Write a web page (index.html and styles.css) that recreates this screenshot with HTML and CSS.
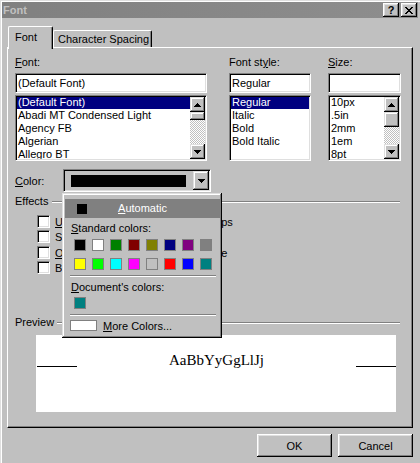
FILE: index.html
```html
<!DOCTYPE html>
<html>
<head>
<meta charset="utf-8">
<title>Font</title>
<link rel="stylesheet" href="styles.css">
</head>
<body>
<div class="window">
  <div class="titlebar">
    <span class="title">Font</span>
    <div class="tbtns">
      <span class="tbtn help">?</span>
      <span class="tbtn close"><svg width="8" height="7" viewBox="0 0 8 7" shape-rendering="crispEdges"><path d="M0 0h2v1H0zM6 0h2v1H6zM1 1h2v1H1zM5 1h2v1H5zM2 2h4v1H2zM3 3h2v1H3zM2 4h4v1H2zM1 5h2v1H1zM5 5h2v1H5zM0 6h2v1H0zM6 6h2v1H6z" fill="#000"/></svg></span>
    </div>
  </div>

  <div class="tabs">
    <div class="tab active">Font</div>
    <div class="tab">Character Spacing</div>
  </div>

  <div class="panel">
    <div class="selrow">
      <div class="col c-font">
        <div class="lbl"><u>F</u>ont:</div>
        <div class="field">(Default Font)</div>
        <div class="list">
          <div class="items">
            <div class="item sel">(Default Font)</div>
            <div class="item">Abadi MT Condensed Light</div>
            <div class="item">Agency FB</div>
            <div class="item">Algerian</div>
            <div class="item">Allegro BT</div>
          </div>
          <div class="vscroll">
            <div class="sbtn"><svg width="7" height="4" viewBox="0 0 7 4" shape-rendering="crispEdges"><path d="M3 0h1v1h1v1h1v1h1v1H0V3h1V2h1V1h1z" fill="#000"/></svg></div>
            <div class="thumb"></div>
            <div class="track"></div>
            <div class="sbtn"><svg width="7" height="4" viewBox="0 0 7 4" shape-rendering="crispEdges"><path d="M0 0h7v1H6v1H5v1H4v1H3V3H2V2H1V1H0z" fill="#000"/></svg></div>
          </div>
        </div>
      </div>

      <div class="col c-style">
        <div class="lbl">Font st<u>y</u>le:</div>
        <div class="field">Regular</div>
        <div class="list">
          <div class="items">
            <div class="item sel">Regular</div>
            <div class="item">Italic</div>
            <div class="item">Bold</div>
            <div class="item">Bold Italic</div>
          </div>
        </div>
      </div>

      <div class="col c-size">
        <div class="lbl"><u>S</u>ize:</div>
        <div class="field"></div>
        <div class="list">
          <div class="items">
            <div class="item">10px</div>
            <div class="item">.5in</div>
            <div class="item">2mm</div>
            <div class="item">1em</div>
            <div class="item">8pt</div>
          </div>
          <div class="vscroll">
            <div class="sbtn"><svg width="7" height="4" viewBox="0 0 7 4" shape-rendering="crispEdges"><path d="M3 0h1v1h1v1h1v1h1v1H0V3h1V2h1V1h1z" fill="#000"/></svg></div>
            <div class="thumb tall"></div>
            <div class="track"></div>
            <div class="sbtn"><svg width="7" height="4" viewBox="0 0 7 4" shape-rendering="crispEdges"><path d="M0 0h7v1H6v1H5v1H4v1H3V3H2V2H1V1H0z" fill="#000"/></svg></div>
          </div>
        </div>
      </div>
    </div>

    <div class="colorrow">
      <div class="colorlbl"><u>C</u>olor:</div>
      <div class="combo">
        <div class="cswatch"></div>
        <div class="cbtn"><svg width="7" height="4" viewBox="0 0 7 4" shape-rendering="crispEdges"><path d="M0 0h7v1H6v1H5v1H4v1H3V3H2V2H1V1H0z" fill="#000"/></svg></div>
      </div>
    </div>

    <div class="legend effects-legend"><span>Effects</span><span class="rule"></span></div>
    <div class="checks">
      <label class="chk"><span class="box"></span><span><u>U</u>nderline</span></label>
      <label class="chk"><span class="box"></span><span>Small caps</span></label>
      <label class="chk"><span class="box"></span><span>Stri<u>k</u>ethrough</span></label>
      <label class="chk"><span class="box"></span><span>Hidden</span></label>
      <label class="chk"><span class="box"></span><span><u>O</u>verline</span></label>
      <label class="chk"><span class="box"></span><span>Capitalize</span></label>
      <label class="chk"><span class="box"></span><span>Blink</span></label>
      <label class="chk"><span class="box"></span><span>Strong</span></label>
    </div>

    <div class="legend preview-legend"><span>Preview</span><span class="rule"></span></div>
    <div class="preview">
      <div class="prow">
        <span class="pline left"></span>
        <span class="ptext">AaBbYyGgLlJj</span>
        <span class="pline right"></span>
      </div>
    </div>
  </div>

  <div class="footer">
    <button class="btn">OK</button>
    <button class="btn">Cancel</button>
  </div>

  <div class="popup">
    <div class="auto"><span class="autosw"></span><span class="autotext"><u>A</u>utomatic</span></div>
    <div class="plbl"><u>S</u>tandard colors:</div>
    <div class="grid">
      <span class="sw" style="background:#000000"></span>
      <span class="sw" style="background:#ffffff"></span>
      <span class="sw" style="background:#008000"></span>
      <span class="sw" style="background:#800000"></span>
      <span class="sw" style="background:#808000"></span>
      <span class="sw" style="background:#000080"></span>
      <span class="sw" style="background:#800080"></span>
      <span class="sw" style="background:#808080"></span>
      <span class="sw" style="background:#ffff00"></span>
      <span class="sw" style="background:#00ff00"></span>
      <span class="sw" style="background:#00ffff"></span>
      <span class="sw" style="background:#ff00ff"></span>
      <span class="sw" style="background:#c0c0c0"></span>
      <span class="sw" style="background:#ff0000"></span>
      <span class="sw" style="background:#0000ff"></span>
      <span class="sw" style="background:#008080"></span>
    </div>
    <div class="sep"></div>
    <div class="plbl"><u>D</u>ocument's colors:</div>
    <div class="docsw"><span class="sw" style="background:#008080"></span></div>
    <div class="sep"></div>
    <div class="more"><span class="morebox"></span><span><u>M</u>ore Colors...</span></div>
  </div>
</div>
</body>
</html>
```

FILE: styles.css
```css
* { box-sizing: border-box; }
html, body { margin: 0; padding: 0; }
body {
  background: #c0c0c0;
  font-family: "Liberation Sans", Arial, sans-serif;
  font-size: 11px;
  color: #000;
  overflow: hidden;
}
u { text-decoration: underline; text-underline-offset: 1px; }

.window {
  position: relative;
  width: 420px;
  height: 463px;
  padding: 2px;
  background: #c0c0c0;
  box-shadow: inset 1px 1px #dfdfdf, inset 2px 2px #fff;
}

/* title bar */
.titlebar {
  height: 16px;
  display: flex;
  align-items: center;
  justify-content: space-between;
  background: linear-gradient(to right, #808080, #8e8e8e);
  padding: 0 1px;
}
.title { font-weight: bold; color: #c0c0c0; line-height: 16px; }
.tbtns { display: flex; gap: 2px; }
.tbtn {
  width: 16px;
  height: 14px;
  background: #c0c0c0;
  box-shadow: inset -1px -1px #000, inset 1px 1px #fff, inset -2px -2px #808080, inset 2px 2px #dfdfdf;
  display: flex;
  align-items: center;
  justify-content: center;
  font-weight: bold;
  font-size: 11px;
  line-height: 14px;
}
.tbtn svg { display: block; }

/* tabs */
.tabs {
  height: 31px;
  display: flex;
  align-items: flex-end;
  padding-left: 6px;
  margin-bottom: -2px;
  position: relative;
  z-index: 2;
}
.tab {
  width: 99px;
  height: 17px;
  margin-bottom: 2px;
  border: 1px solid #fff;
  border-bottom: none;
  border-right-color: #000;
  box-shadow: inset -1px 0 #808080;
  border-radius: 2px 2px 0 0;
  padding-left: 4px;
  line-height: 16px;
  background: #c0c0c0;
  white-space: nowrap;
}
.tab.active {
  width: 45px;
  height: 23px;
  margin-bottom: 0;
  padding-left: 6px;
  line-height: 20px;
}

/* panel */
.panel {
  margin-left: 5px;
  width: 406px;
  height: 381px;
  border: 1px solid #fff;
  border-right-color: #000;
  border-bottom-color: #000;
  box-shadow: inset -1px -1px #808080;
  padding: 8px 10px 0 7px;
}

.selrow { display: flex; }
.col { display: flex; flex-direction: column; }
.c-font { width: 192px; }
.c-style { width: 82px; margin-left: 22px; }
.c-size { width: 73px; margin-left: 17px; }
.lbl { height: 13px; line-height: 13px; margin-bottom: 4px; white-space: nowrap; }

.field, .list, .combo {
  border: 1px solid;
  border-color: #808080 #fff #fff #808080;
  box-shadow: inset 1px 1px #000, inset -1px -1px #dfdfdf;
}
.field {
  height: 20px;
  background: #fff;
  line-height: 18px;
  padding-left: 2px;
  white-space: nowrap;
}
.list {
  height: 66px;
  margin-top: 2px;
  background: #fff;
  display: flex;
  padding: 1px;
}
.items { flex: 1; overflow: hidden; min-width: 0; margin-top: -1px; }
.item { height: 13px; line-height: 13px; padding-left: 1px; white-space: nowrap; }
.item.sel {
  color: #fff;
  background: linear-gradient(#000080, #000080) 0 1px / 100% 12px no-repeat;
}

.vscroll {
  width: 15px;
  flex: none;
  display: flex;
  flex-direction: column;
  background: repeating-conic-gradient(#c0c0c0 0 25%, #fff 0 50%) 0 0 / 2px 2px;
}
.sbtn, .thumb, .cbtn {
  background: #c0c0c0;
  box-shadow: inset -1px -1px #000, inset 1px 1px #dfdfdf, inset -2px -2px #808080, inset 2px 2px #fff;
}
.sbtn { height: 15px; flex: none; display: flex; align-items: center; justify-content: center; }
.sbtn svg, .cbtn svg { display: block; }
.thumb { height: 8px; flex: none; }
.thumb.tall { height: 15px; }
.track { flex: 1; }

/* color row */
.colorrow { display: flex; align-items: center; margin-top: 8px; height: 23px; }
.colorlbl { width: 48px; }
.combo {
  width: 148px;
  height: 23px;
  display: flex;
  align-items: center;
  padding: 1px 1px 1px 7px;
  background: #c0c0c0;
}
.cswatch { width: 115px; height: 12px; background: #000; }
.cbtn {
  width: 16px;
  height: 19px;
  margin-left: auto;
  display: flex;
  align-items: center;
  justify-content: center;
}

/* group legends */
.legend { display: flex; align-items: center; height: 13px; line-height: 13px; }
.legend .rule {
  flex: 1;
  height: 2px;
  border-top: 1px solid #808080;
  border-bottom: 1px solid #fff;
  margin: 0 2px 0 4px;
}
.effects-legend { margin-top: 3px; }
.preview-legend { margin-top: 42px; }
.preview-legend .rule { margin-left: 3px; }

.checks {
  display: grid;
  grid-template-columns: 124px auto;
  grid-template-rows: 15px 16px 15px 13px;
  margin: 7px 0 0 22px;
}
.chk { display: flex; align-items: center; gap: 5px; height: 13px; white-space: nowrap; }
.box {
  width: 13px;
  height: 13px;
  flex: none;
  background: #fff;
  border: 1px solid;
  border-color: #808080 #fff #fff #808080;
  box-shadow: inset 1px 1px #000, inset -1px -1px #dfdfdf;
}

/* preview */
.preview {
  margin: 6px 0 0 21px;
  width: 360px;
  height: 77px;
  background: #fff;
  padding-top: 17px;
}
.prow { display: flex; align-items: flex-start; justify-content: space-between; }
.pline { width: 40px; height: 1px; background: #000; margin-top: 14px; }
.pline.left { margin-left: 1px; }
.ptext {
  font-family: "Liberation Serif", "Times New Roman", serif;
  font-size: 15px;
  line-height: 17px;
}

/* footer */
.footer { display: flex; justify-content: flex-end; gap: 6px; margin-top: 6px; padding-right: 5px; }
.btn {
  width: 75px;
  height: 23px;
  border: none;
  background: #c0c0c0;
  font-family: "Liberation Sans", Arial, sans-serif;
  font-size: 11px;
  color: #000;
  padding: 0;
  box-shadow: inset -1px -1px #000, inset 1px 1px #fff, inset -2px -2px #808080, inset 2px 2px #dfdfdf;
}

/* colour popup */
.popup {
  position: absolute;
  left: 62px;
  top: 193px;
  width: 160px;
  height: 145px;
  background: #c0c0c0;
  box-shadow: inset -1px -1px #000, inset 1px 1px #dfdfdf, inset -2px -2px #808080, inset 2px 2px #fff;
  padding: 6px 2px 0 3px;
  z-index: 5;
}
.auto { height: 19px; background: #808080; display: flex; align-items: center; color: #fff; }
.autosw { width: 10px; height: 10px; background: #000; margin-left: 12px; flex: none; }
.autotext { flex: 1; text-align: center; margin-right: 22px; line-height: 13px; }
.plbl { margin: 4px 0 0 6px; height: 13px; line-height: 13px; white-space: nowrap; }
.grid {
  display: grid;
  grid-template-columns: repeat(8, 12px);
  column-gap: 6px;
  row-gap: 7px;
  margin: 4px 0 0 9px;
}
.sw { display: block; width: 12px; height: 12px; border: 1px solid #808080; }
.sep {
  height: 2px;
  border-top: 1px solid #808080;
  border-bottom: 1px solid #fff;
  margin: 5px 4px 0 5px;
}
.docsw { margin: 3px 0 0 9px; }
.more { display: flex; align-items: center; gap: 6px; height: 11px; margin: 4px 0 0 5px; white-space: nowrap; }
.morebox { width: 27px; height: 11px; background: #fff; border: 1px solid #808080; flex: none; }
```
